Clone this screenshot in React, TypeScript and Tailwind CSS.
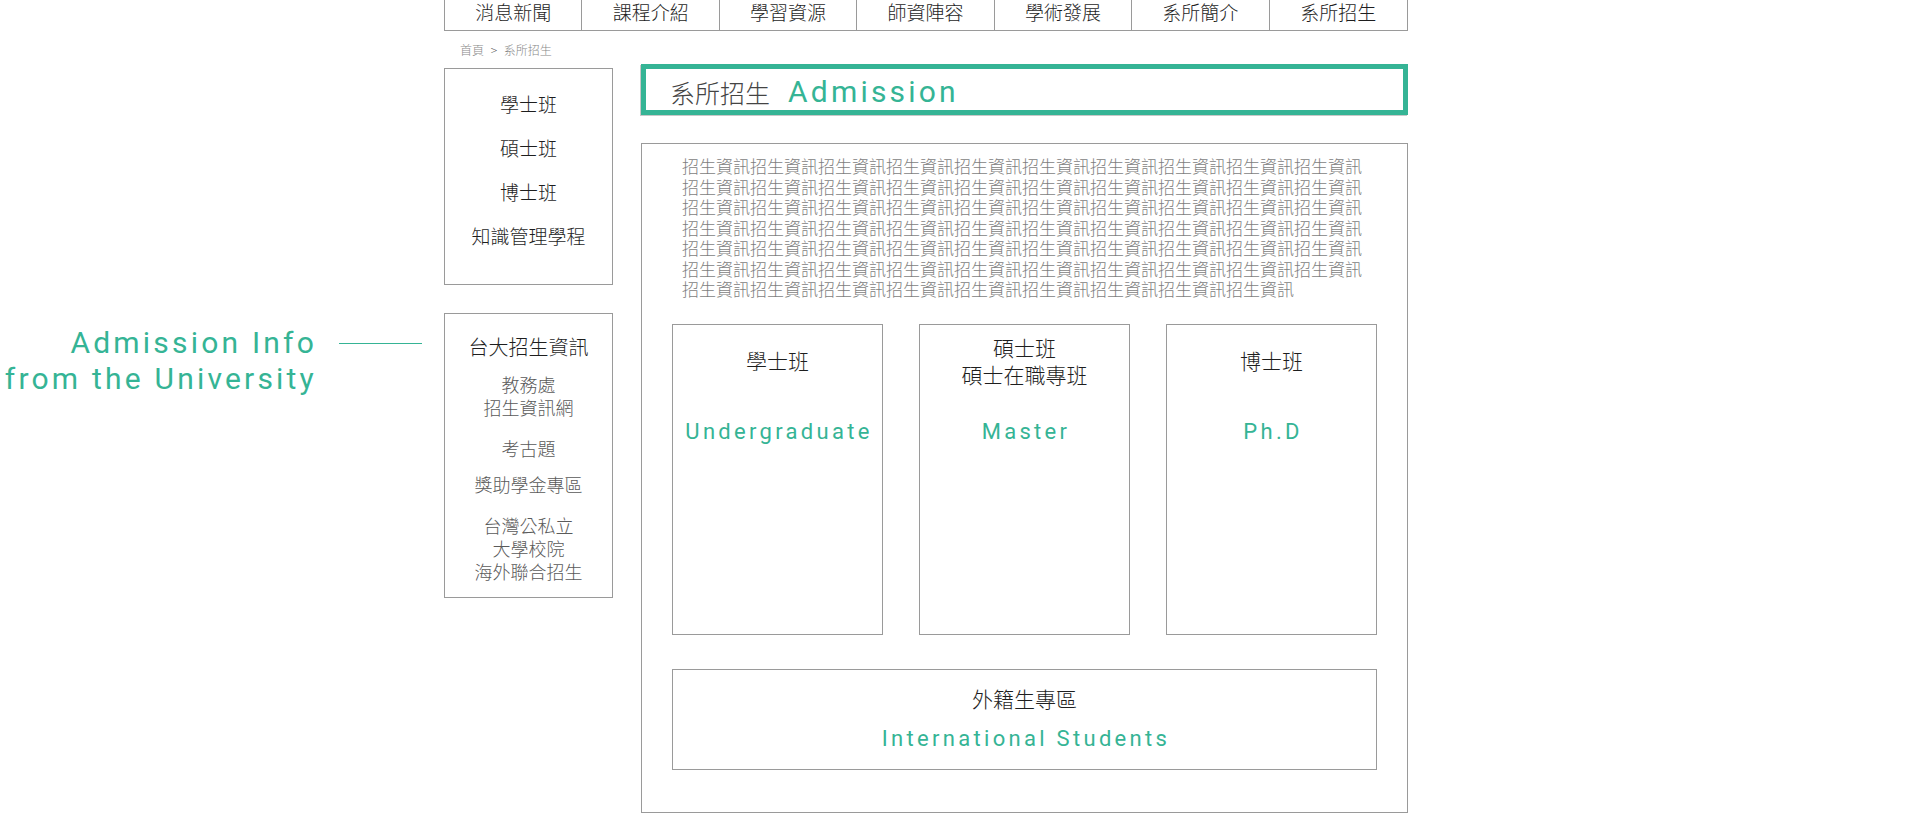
import React from 'react';

const navItems = ['消息新聞', '課程介紹', '學習資源', '師資陣容', '學術發展', '系所簡介', '系所招生'];
const programs = ['學士班', '碩士班', '博士班', '知識管理學程'];

const cards = [
  { zh: ['學士班'], en: 'Undergraduate' },
  { zh: ['碩士班', '碩士在職專班'], en: 'Master' },
  { zh: ['博士班'], en: 'Ph.D' },
];

const cjk = "font-['Noto_Sans_CJK_TC','Noto_Sans_CJK_SC',sans-serif]";
const latin = "font-['Roboto','Liberation_Sans',sans-serif]";

export default function App() {
  return (
    <div className={`min-h-[834px] w-[1917px] bg-white ${cjk}`}>
      <div className="flex">
        {/* left annotation */}
        <div className="flex w-[444px] shrink-0 items-start justify-end pr-[22px] pt-[325px]">
          <div className={`${latin} text-right text-[30px] font-normal leading-[36px] tracking-[3.2px] text-[#35b495]`}>
            <div>Admission Info</div>
            <div>from the University</div>
          </div>
          <div className="ml-[22px] mt-[18px] h-px w-[83px] bg-[#35b495]" />
        </div>

        <div className="w-[964px] shrink-0">
          {/* top nav */}
          <div className="grid h-[31px] grid-cols-7 border-x border-b border-[#9a9a9a]">
            {navItems.map((item, i) => (
              <div
                key={item}
                className={`flex items-start justify-center text-[19px] font-light leading-[24px] text-[#1e1e1e] ${
                  i < navItems.length - 1 ? 'border-r border-[#9a9a9a]' : ''
                }`}
              >
                {item}
              </div>
            ))}
          </div>

          {/* breadcrumb */}
          <div className="h-[33px] pl-4 pt-[11px] text-[12px] font-light leading-[16px] text-[#888]">
            首頁 <span className="mx-1 text-[#555]">&gt;</span> 系所招生
          </div>

          <div className="flex gap-[28px]">
            {/* sidebar */}
            <div className="mt-[4px] flex w-[169px] shrink-0 flex-col gap-[28px]">
              <div className="flex h-[217px] flex-col items-center border border-[#9a9a9a] pt-[13px]">
                {programs.map((p) => (
                  <div key={p} className="text-[19px] font-light leading-[44px] text-[#1e1e1e]">
                    {p}
                  </div>
                ))}
              </div>

              <div className="flex h-[285px] flex-col items-center border border-[#9a9a9a] pt-[19px] text-center">
                <div className="text-[20px] font-light leading-[28px] text-[#1e1e1e]">台大招生資訊</div>
                <div className="mt-[12px] text-[18px] font-light leading-[23px] text-[#5a5a5a]">
                  教務處
                  <br />
                  招生資訊網
                </div>
                <div className="mt-[18px] text-[18px] font-light leading-[23px] text-[#5a5a5a]">考古題</div>
                <div className="mt-[13px] text-[18px] font-light leading-[23px] text-[#5a5a5a]">獎助學金專區</div>
                <div className="mt-[18px] text-[18px] font-light leading-[23px] text-[#5a5a5a]">
                  台灣公私立
                  <br />
                  大學校院
                  <br />
                  海外聯合招生
                </div>
              </div>
            </div>

            {/* main */}
            <div className="w-[767px] shrink-0">
              <div className="flex h-[51px] items-center border-[5px] border-[#35b495] pl-[24px] pt-[4px] shadow-[-1px_1px_0_#c8c8c8]">
                <span className="text-[25px] font-light leading-[32px] text-[#444]">系所招生</span>
                <span className={`${latin} ml-[18px] text-[30px] font-normal leading-[32px] tracking-[3.2px] text-[#35b495]`}>
                  Admission
                </span>
              </div>

              <div className="mt-[28px] h-[670px] border border-[#9a9a9a] pl-[30px] pr-[30px] pt-[12px]">
                <p className="ml-[10px] w-[681px] break-all text-[17px] font-light leading-[20.5px] text-[#7e7e7e]">
                  {'招生資訊'.repeat(69)}
                </p>

                <div className="mt-[24px] flex gap-[36px]">
                  {cards.map((c) => (
                    <div key={c.en} className="flex h-[311px] w-[211px] flex-col items-center border border-[#9a9a9a] pt-[5px]">
                      <div className="flex h-[62px] flex-col items-center justify-center text-[21px] font-light leading-[27px] text-[#1e1e1e]">
                        {c.zh.map((z) => (
                          <div key={z}>{z}</div>
                        ))}
                      </div>
                      <div
                        className={`${latin} mt-[25px] pl-[3px] text-[22px] font-normal leading-[30px] tracking-[3.3px] text-[#35b495]`}
                      >
                        {c.en}
                      </div>
                    </div>
                  ))}
                </div>

                <div className="mt-[34px] flex h-[101px] flex-col items-center border border-[#9a9a9a] pt-[15px]">
                  <div className="text-[21px] font-light leading-[27px] text-[#1e1e1e]">外籍生專區</div>
                  <div className={`${latin} mt-[12px] pl-[3px] text-[22px] font-normal leading-[30px] tracking-[3.3px] text-[#35b495]`}>
                    International Students
                  </div>
                </div>
              </div>
            </div>
          </div>
        </div>
      </div>
    </div>
  );
}
